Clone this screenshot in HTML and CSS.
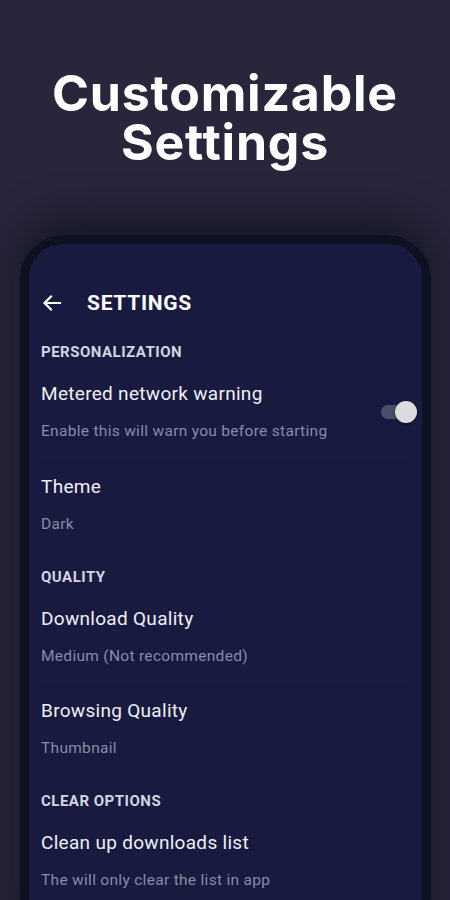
FILE: index.html
```html
<!DOCTYPE html>
<html lang="en">
<head>
    <meta charset="UTF-8">
    <meta name="viewport" content="width=device-width, initial-scale=1.0">
    <title>Customizable Settings</title>
    <link rel="stylesheet" href="styles.css">
</head>
<body>
    <h1 class="headline">Customizable<br>Settings</h1>

    <div class="phone">
        <div class="screen">
            <div class="appbar">
                <svg class="back" width="20" height="20" viewBox="0 0 20 20">
                    <path d="M18 10H3M9 3.5L2.5 10L9 16.5" fill="none" stroke="#fff" stroke-width="2.2" stroke-linecap="square"/>
                </svg>
                <span class="appbar-title">SETTINGS</span>
            </div>

            <div class="section-title first">PERSONALIZATION</div>
            <div class="item">
                <div class="item-text">
                    <div class="item-title">Metered network warning</div>
                    <div class="item-sub clipped">Enable this will warn you before starting<br>downloads on a metered network</div>
                </div>
                <div class="toggle"><span class="knob"></span></div>
            </div>
            <div class="item">
                <div class="item-text">
                    <div class="item-title">Theme</div>
                    <div class="item-sub">Dark</div>
                </div>
            </div>

            <div class="section-title">QUALITY</div>
            <div class="item">
                <div class="item-text">
                    <div class="item-title">Download Quality</div>
                    <div class="item-sub">Medium (Not recommended)</div>
                </div>
            </div>
            <div class="item">
                <div class="item-text">
                    <div class="item-title">Browsing Quality</div>
                    <div class="item-sub">Thumbnail</div>
                </div>
            </div>

            <div class="section-title">CLEAR OPTIONS</div>
            <div class="item">
                <div class="item-text">
                    <div class="item-title">Clean up downloads list</div>
                    <div class="item-sub">The will only clear the list in app</div>
                </div>
            </div>
        </div>
    </div>
</body>
</html>
```

FILE: styles.css
```css
html, body {
    height: 100%;
}
body {
    margin: 0;
    background-color: #28263b;
    overflow: hidden;
    font-family: Roboto, "Noto Sans", sans-serif;
}
.headline {
    margin: 0;
    padding-top: 69px;
    height: 165px;
    box-sizing: border-box;
    text-align: center;
    color: #ffffff;
    font-family: Inter, "Open Sans", sans-serif;
    font-weight: 700;
    font-size: 50px;
    line-height: 49px;
    letter-spacing: 0.8px;
}
.phone {
    margin: 70px 0 0 20px;
    width: 393px;
    height: 700px;
    border: 9px solid #0d1122;
    border-radius: 44px;
    box-shadow: 0 -14px 40px rgba(10, 10, 20, 0.55);
    overflow: hidden;
}
.screen {
    height: 100%;
    background-color: #181a40;
    border-radius: 36px 36px 0 0;
    padding: 31px 12px 0 12px;
}
.appbar {
    height: 56px;
    display: flex;
    align-items: center;
    color: #ffffff;
}
.back {
    margin-left: 1px;
    margin-right: 25px;
}
.appbar-title {
    font-size: 21px;
    font-weight: 700;
    letter-spacing: 0.7px;
}
.section-title {
    margin-top: 18px;
    margin-bottom: 2px;
    font-size: 15px;
    font-weight: 700;
    line-height: 20px;
    letter-spacing: 0.5px;
    color: #d4d4e0;
}
.section-title.first {
    margin-top: 11px;
}
.item {
    display: flex;
    align-items: center;
    padding: 18px 0 14px 0;
    border-bottom: 1px solid rgba(255, 255, 255, 0.012);
}
.item-text {
    flex: 1;
}
.item-title {
    font-size: 19px;
    line-height: 24px;
    letter-spacing: 0.3px;
    color: #f0f0f4;
}
.item-sub {
    margin-top: 15px;
    font-size: 15.5px;
    line-height: 20px;
    letter-spacing: 0.3px;
    color: #8a8ba6;
}
.item-sub.clipped {
    height: 24px;
    margin-bottom: -3px;
    overflow: hidden;
}
.toggle {
    position: relative;
    width: 30px;
    height: 14px;
    margin-right: -1px;
    border-radius: 7px;
    background-color: #4c4f6c;
}
.knob {
    position: absolute;
    top: -4px;
    right: -6px;
    width: 22px;
    height: 22px;
    border-radius: 50%;
    background-color: #dcdce0;
    box-shadow: 0 1px 3px rgba(0, 0, 0, 0.5);
}
```
